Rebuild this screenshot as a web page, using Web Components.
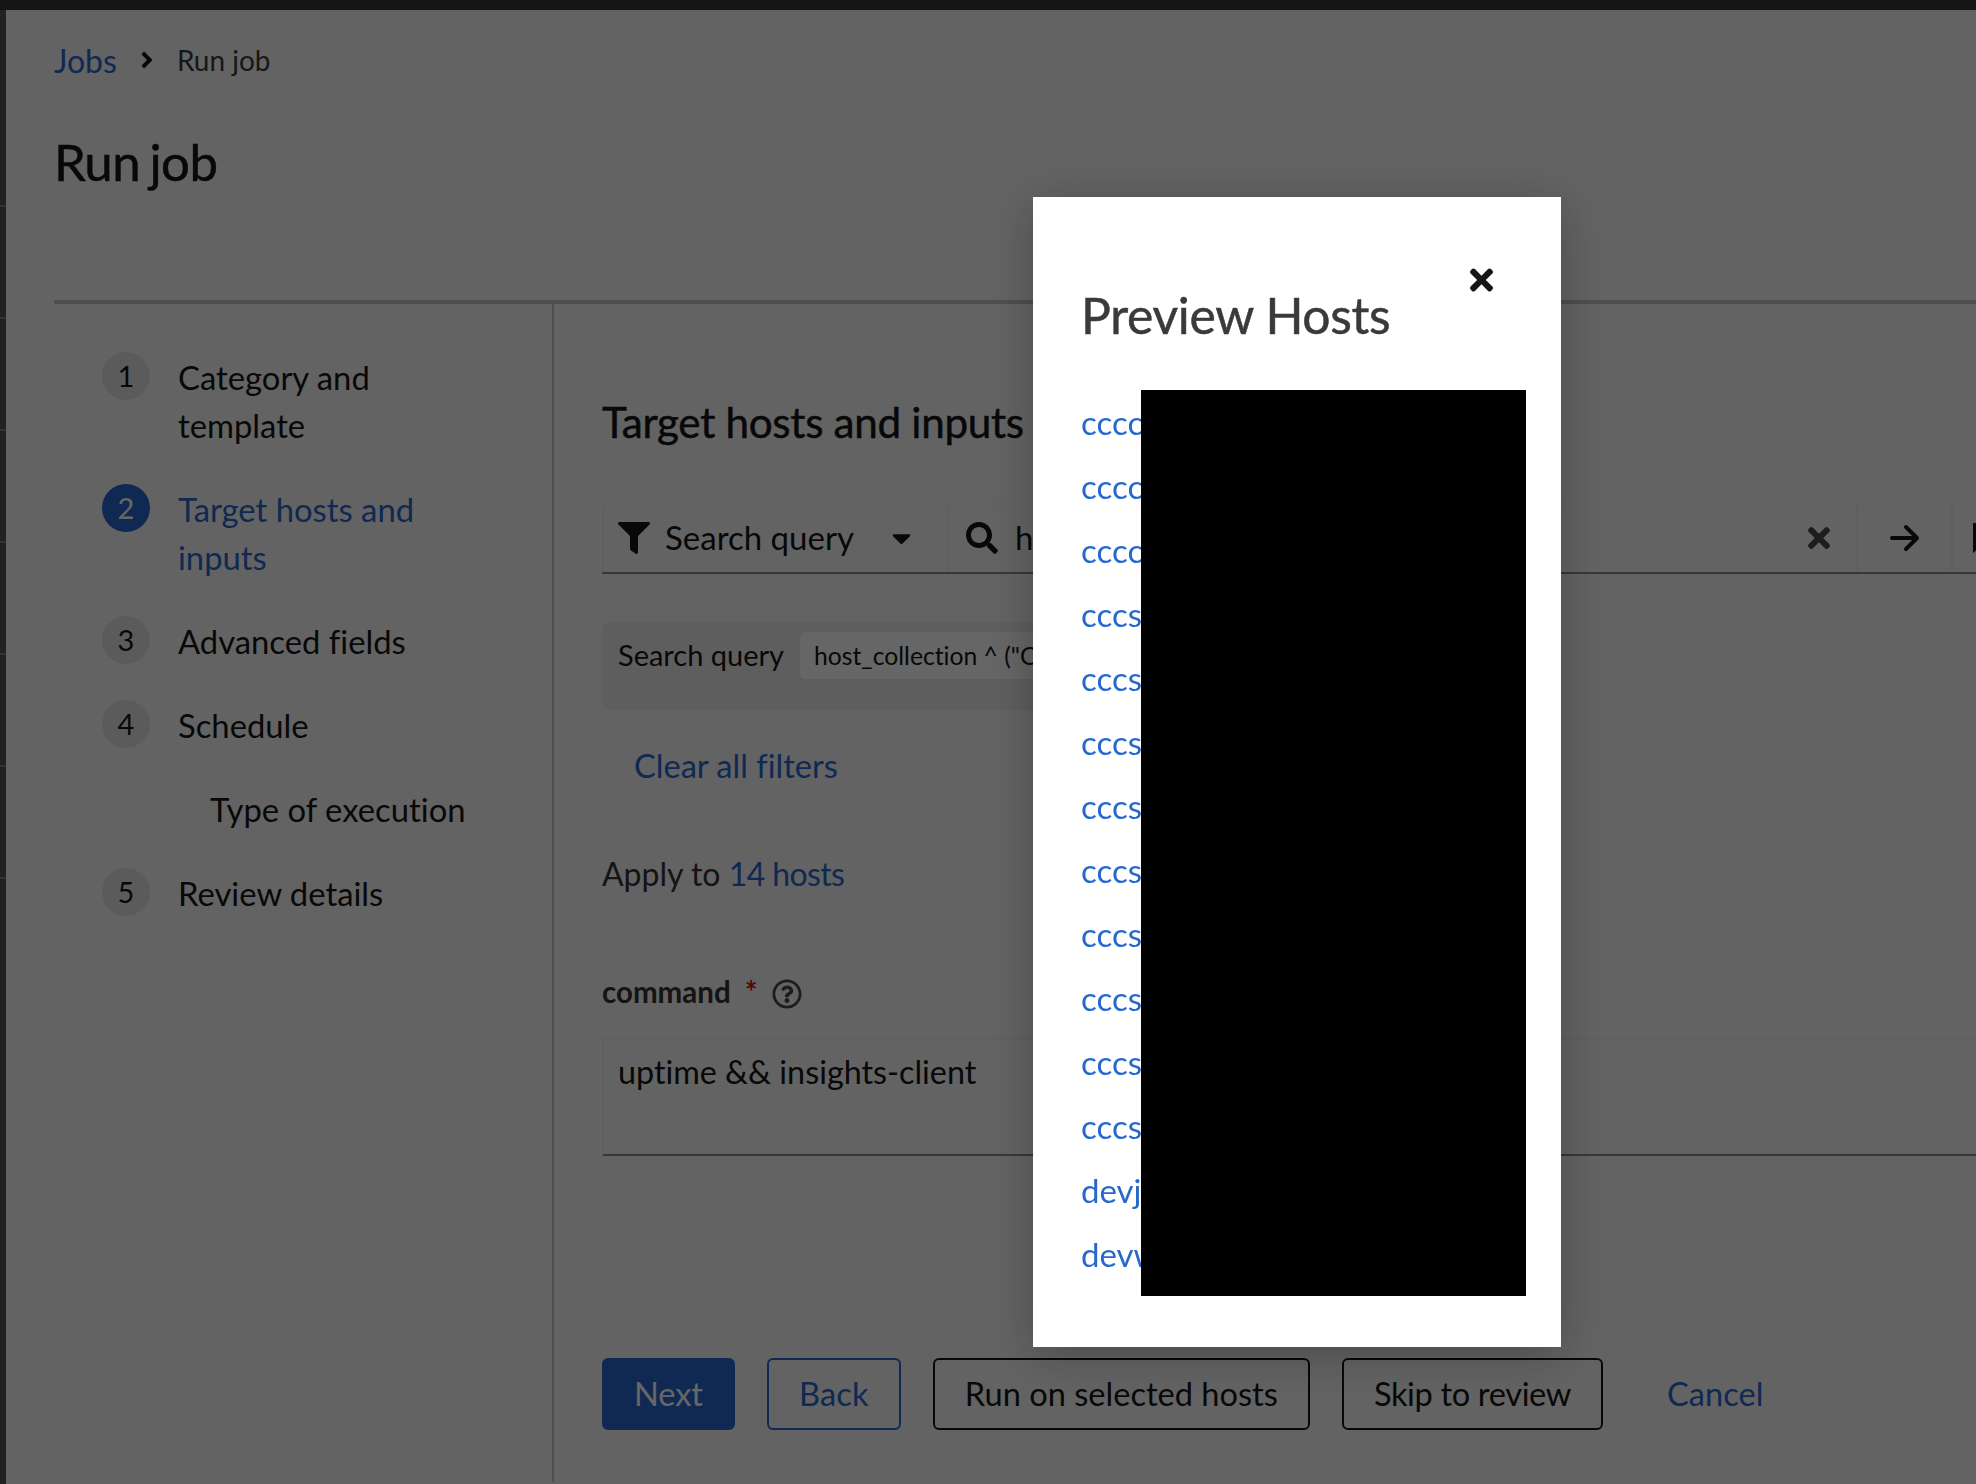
<!DOCTYPE html>
<html lang="en"><head><meta charset="utf-8"><title>Run job</title>
<style>
html,body{margin:0;padding:0;background:#f8f8f8;overflow:hidden}
body{width:1976px;height:1484px;font-family:Lato,"Open Sans",sans-serif;color:#151515;font-variant-ligatures:none}
</style></head><body>
<aap-app>
  <aap-breadcrumb><a slot="link">Jobs</a><span slot="current">Run job</span></aap-breadcrumb>
  <aap-title>Run job</aap-title>
  <aap-wizard>
    <aap-step slot="nav" num="1">Category and<br>template</aap-step>
    <aap-step slot="nav" num="2" current>Target hosts and<br>inputs</aap-step>
    <aap-step slot="nav" num="3">Advanced fields</aap-step>
    <aap-step slot="nav" num="4">Schedule</aap-step>
    <aap-step slot="nav" sub>Type of execution</aap-step>
    <aap-step slot="nav" num="5">Review details</aap-step>
    <aap-target></aap-target>
  </aap-wizard>
</aap-app>
<aap-backdrop></aap-backdrop>
<aap-modal heading="Preview Hosts">
  <a>cccc</a><a>cccc</a><a>cccc</a><a>cccs</a><a>cccs</a><a>cccs</a><a>cccs</a><a>cccs</a><a>cccs</a><a>cccs</a><a>cccs</a><a>cccs</a><a>devj</a><a>devw</a>
</aap-modal>
<script>
const I={
filter:['0 0 512 512','M487.976 0H24.028C2.71 0-8.047 25.866 7.058 40.971L192 225.941V432c0 7.831 3.821 15.17 10.237 19.662l80 55.98C298.02 518.69 320 507.493 320 487.98V225.941l184.947-184.97C520.021 25.896 509.338 0 487.976 0z'],
search:['0 0 512 512','M505 442.7L405.3 343c-4.5-4.5-10.6-7-17-7H372c27.6-35.3 44-79.7 44-128C416 93.1 322.9 0 208 0S0 93.1 0 208s93.1 208 208 208c48.3 0 92.7-16.4 128-44v16.3c0 6.4 2.5 12.5 7 17l99.7 99.7c9.4 9.4 24.6 9.4 33.9 0l28.3-28.3c9.4-9.4 9.4-24.6.1-34zM208 336c-70.7 0-128-57.2-128-128 0-70.7 57.2-128 128-128 70.7 0 128 57.2 128 128 0 70.7-57.2 128-128 128z'],
times:['0 0 352 512','M242.72 256l100.07-100.07c12.28-12.28 12.28-32.19 0-44.48l-22.24-22.24c-12.28-12.28-32.19-12.28-44.48 0L176 189.28 75.93 89.21c-12.28-12.28-32.19-12.28-44.48 0L9.21 111.45c-12.28 12.28-12.28 32.19 0 44.48L109.28 256 9.21 356.07c-12.28 12.28-12.28 32.19 0 44.48l22.24 22.24c12.28 12.28 32.2 12.28 44.48 0L176 322.72l100.07 100.07c12.28 12.28 32.2 12.28 44.48 0l22.24-22.24c12.28-12.28 12.28-32.19 0-44.48L242.72 256z'],
caret:['0 0 320 512','M31.3 192h257.3c17.8 0 26.7 21.5 14.1 34.1L174.1 354.8c-7.8 7.8-20.5 7.8-28.3 0L17.2 226.1C4.6 213.5 13.5 192 31.3 192z'],
angle:['0 0 256 512','M224.3 273l-136 136c-9.4 9.4-24.6 9.4-33.9 0l-22.6-22.6c-9.4-9.4-9.4-24.6 0-33.9l96.4-96.4-96.4-96.4c-9.4-9.4-9.4-24.6 0-33.9L54.3 103c9.4-9.4 24.6-9.4 33.9 0l136 136c9.5 9.4 9.5 24.6.1 34z'],
help:['0 0 512 512','M256 8C119.043 8 8 119.083 8 256c0 136.997 111.043 248 248 248s248-111.003 248-248C504 119.083 392.957 8 256 8zm0 448c-110.532 0-200-89.431-200-200 0-110.495 89.472-200 200-200 110.491 0 200 89.471 200 200 0 110.53-89.431 200-200 200zm107.244-255.2c0 67.052-72.421 68.084-72.421 92.863V300c0 6.627-5.373 12-12 12h-45.647c-6.627 0-12-5.373-12-12v-8.659c0-35.745 27.1-50.034 47.579-61.516 17.561-9.845 28.324-16.541 28.324-29.579 0-17.246-21.999-28.693-39.784-28.693-23.189 0-33.894 10.977-48.942 29.969-4.057 5.12-11.46 6.071-16.666 2.124l-27.824-21.098c-5.107-3.872-6.251-11.066-2.644-16.363C184.846 131.491 214.94 112 261.794 112c49.071 0 101.45 38.304 101.45 88.8zM298 368c0 23.159-18.841 42-42 42s-42-18.841-42-42 18.841-42 42-42 42 18.841 42 42z']
};
const icon=(n,w,h,c='currentColor',extra='')=>`<svg width="${w}" height="${h}" viewBox="${I[n][0]}" fill="${c}" style="flex:none;display:block;${extra}"><path d="${I[n][1]}"/></svg>`;
const BLUE='#2868cd';
class Base extends HTMLElement{
  constructor(){super();this.attachShadow({mode:'open'}).innerHTML=this.markup();}
}
customElements.define('aap-app',class extends Base{markup(){
  return `<style>
  :host{display:grid;grid-template-columns:6px 1fr;grid-template-rows:10px 1fr;width:1976px;height:1484px;overflow:hidden}
  .top{grid-column:1/3;background:#363636}
  .rail{background:#50555f;display:flex;flex-direction:column;padding-top:195px;gap:110px}
  .rail i{display:block;height:2px;background:#7a7d85;flex:none}
  main{min-width:0;overflow:hidden;display:flex;flex-direction:column}
  </style><div class="top"></div><div class="rail">${'<i></i>'.repeat(7)}</div><main><slot></slot></main>`;
}});
customElements.define('aap-breadcrumb',class extends Base{markup(){return `<style>
  :host{display:flex;align-items:center;height:89px;box-sizing:border-box;padding:12px 0 0 48px;font-size:28px;border-bottom:1px solid #ffffff;flex:none;color:#3a3a3a}
  ::slotted(a){color:${BLUE};font-size:32px}
  .sep{margin:0 23px 0 23px;color:#151515}
  </style><slot name="link"></slot><span class="sep">${icon('angle',14,26)}</span><slot name="current"></slot>`;}});
customElements.define('aap-title',class extends Base{markup(){return `<style>
  :host{display:block;height:201px;box-sizing:border-box;padding:33px 0 0 48px;font-size:51px;line-height:60px;letter-spacing:-.6px;word-spacing:-3px;-webkit-text-stroke:.5px currentColor;flex:none}
  </style><slot></slot>`;}});
customElements.define('aap-wizard',class extends Base{markup(){return `<style>
  :host{display:grid;grid-template-columns:500px 1fr;margin-left:48px;width:1922px;flex:1;border-top:4px solid #c4c4c4;min-height:0}
  nav{display:flex;flex-direction:column;gap:36px;padding:47px 0 0 48px;border-right:2px solid #c4c4c4;margin-bottom:2px}
  .c{padding-left:48px;min-width:0;overflow:hidden}
  </style><nav><slot name="nav"></slot></nav><div class="c"><slot></slot></div>`;}});
customElements.define('aap-step',class extends HTMLElement{
  constructor(){super();this.attachShadow({mode:'open'});}
  connectedCallback(){
    const n=this.getAttribute('num'),cur=this.hasAttribute('current'),sub=this.hasAttribute('sub');
    this.shadowRoot.innerHTML=`<style>
    :host{display:flex;gap:28px;font-size:32.8px;line-height:48px;color:${cur?BLUE:'#151515'};${sub?'padding-left:108px;':''}}
    .n{width:48px;height:48px;border-radius:50%;margin:1px 0 -1px;background:${cur?BLUE:'#e4e4e4'};color:${cur?'#fff':'#151515'};display:flex;align-items:center;justify-content:center;font-size:29px;flex:none}
    .t{margin:3px 0 -3px}
    </style>${n?`<span class="n">${n}</span>`:''}<span class="t"><slot></slot></span>`;
  }
});
customElements.define('aap-button',class extends HTMLElement{
  constructor(){super();this.attachShadow({mode:'open'});}
  connectedCallback(){
    const k=this.getAttribute('kind');
    const m={primary:`background:${BLUE};color:#fff;border:2px solid ${BLUE}`,secondary:`color:${BLUE};border:2px solid ${BLUE}`,tertiary:'color:#151515;border:2px solid #151515',link:`color:${BLUE};border:2px solid transparent`}[k];
    const ls=this.getAttribute('tight')||'0';
    this.shadowRoot.innerHTML=`<style>
    :host{display:flex;align-items:center;height:72px;box-sizing:border-box;padding:0 30px 2px;border-radius:6px;font-size:32.6px;letter-spacing:${ls}px;white-space:nowrap;${m}}
    </style><slot></slot>`;
  }
});
customElements.define('aap-target',class extends Base{markup(){return `<style>
  :host{display:flex;flex-direction:column;height:100%}
  h2{margin:0;font-size:42.2px;line-height:52px;font-weight:400;padding-top:92px;letter-spacing:-.3px;white-space:nowrap;-webkit-text-stroke:.5px currentColor}
  .bar{display:flex;align-items:stretch;height:71px;box-sizing:border-box;margin-top:55px;width:1400px;border-top:2px solid #f0f0f0;border-bottom:2px solid #8a8a8a;font-size:33px}
  .seg{display:flex;align-items:center;border-right:2px solid #ededed;box-sizing:border-box;padding-bottom:2px}
  .f{width:347px;padding-left:14px;border-left:2px solid #f0f0f0}
  .f .l{margin:-2px 0 0 15px}
  .f .cr{margin-left:38px}
  .s{width:909px;padding-left:17px;position:relative}
  .s .q{margin:-2px 0 0 17px;flex:1}
  .a{width:95px;justify-content:center}
  .m{padding-left:20px;flex:1}
  .chips{box-sizing:border-box;margin-top:48px;height:88px;width:640px;border-radius:6px;background:#ececec;display:flex;padding:10px 0 0 16px;font-size:29px;gap:16px}
  .cat{line-height:46px}
  .chip{background:#fff;height:47px;line-height:47px;padding:0 14px;border-radius:6px;font-size:24.7px;white-space:nowrap}
  .clear{margin:36px 0 0 32px;font-size:32.6px;line-height:40px;color:${BLUE}}
  .apply{margin-top:68px;font-size:32px;line-height:40px;color:#333}
  .apply a{color:${BLUE};letter-spacing:-.6px}
  .lab{display:flex;align-items:center;margin-top:79px;height:36px;font-size:29.5px;font-weight:700;color:#333}
  .star{color:#c9190b;margin-left:14px;font-size:30px;font-weight:700;line-height:36px}
  .lab svg{margin-left:15px;margin-top:5px}
  .ta{box-sizing:border-box;margin-top:28px;height:119px;width:1400px;border-top:2px solid #f0f0f0;border-left:2px solid #f0f0f0;border-bottom:2px solid #8a8a8a;padding:10px 14px;font-size:32.3px;line-height:46px}
  .btns{display:flex;gap:32px;margin-top:202px}
  </style>
  <h2>Target hosts and inputs</h2>
  <div class="bar">
    <div class="seg f">${icon('filter',32,32)}<span class="l">Search query</span><span class="cr">${icon('caret',19,32,'#151515')}</span></div>
    <div class="seg s">${icon('search',32,32)}<span class="q">h</span><span style="margin-right:26px">${icon('times',22,32,'#4a4a4a')}</span></div>
    <div class="seg a"><svg width="30" height="28" viewBox="0 0 30 28" fill="none" stroke="#151515" stroke-width="4" stroke-linecap="round" stroke-linejoin="round"><path d="M2 14H27M16 3L27 14L16 25"/></svg></div>
    <div class="seg m"><svg width="20" height="30" viewBox="0 0 20 30" fill="#151515"><path d="M0 0H20V30L10 22L0 30Z"/></svg></div>
  </div>
  <div class="chips"><span class="cat">Search query</span><span class="chip">host_collection ^ ("C</span></div>
  <div class="clear">Clear all filters</div>
  <div class="apply">Apply to <a>14 hosts</a></div>
  <div class="lab">command<span class="star">*</span>${icon('help',30,30,'#4a4a4a')}</div>
  <div class="ta">uptime &amp;&amp; insights-client</div>
  <div class="btns">
    <aap-button kind="primary" tight="-.1">Next</aap-button>
    <aap-button kind="secondary" tight=".2">Back</aap-button>
    <aap-button kind="tertiary">Run on selected hosts</aap-button>
    <aap-button kind="tertiary" tight="-.35">Skip to review</aap-button>
    <aap-button kind="link">Cancel</aap-button>
  </div>`;}});
customElements.define('aap-backdrop',class extends Base{markup(){return `<style>
  :host{position:fixed;inset:0;background:rgba(0,0,0,.6);display:block}
  </style>`;}});
customElements.define('aap-modal',class extends HTMLElement{
  constructor(){super();this.attachShadow({mode:'open'});}
  connectedCallback(){
    this.shadowRoot.innerHTML=`<style>
    :host{position:fixed;left:1033px;top:197px;width:528px;height:1150px;box-sizing:border-box;background:#fff;box-shadow:0 8px 44px rgba(0,0,0,.28);padding:0 0 0 48px;display:flex;flex-direction:column;overflow:visible}
    .close{position:absolute;left:437px;top:66px;color:#151515}
    h1{margin:0;padding-top:88px;font-size:49.8px;line-height:60px;font-weight:400;color:#3a3a3a;letter-spacing:-.3px;-webkit-text-stroke:.5px currentColor}
    .list{display:flex;flex-direction:column;margin-top:53px}
    ::slotted(a){display:block;height:64px;line-height:48px;font-size:33px;color:${BLUE}}
    .red{position:absolute;left:108px;top:193px;width:385px;height:906px;background:#000}
    </style><span class="close">${icon('times',23,34)}</span><h1>${this.getAttribute('heading')}</h1><div class="list"><slot></slot></div><div class="red"></div>`;
  }
});
</script>
</body></html>
